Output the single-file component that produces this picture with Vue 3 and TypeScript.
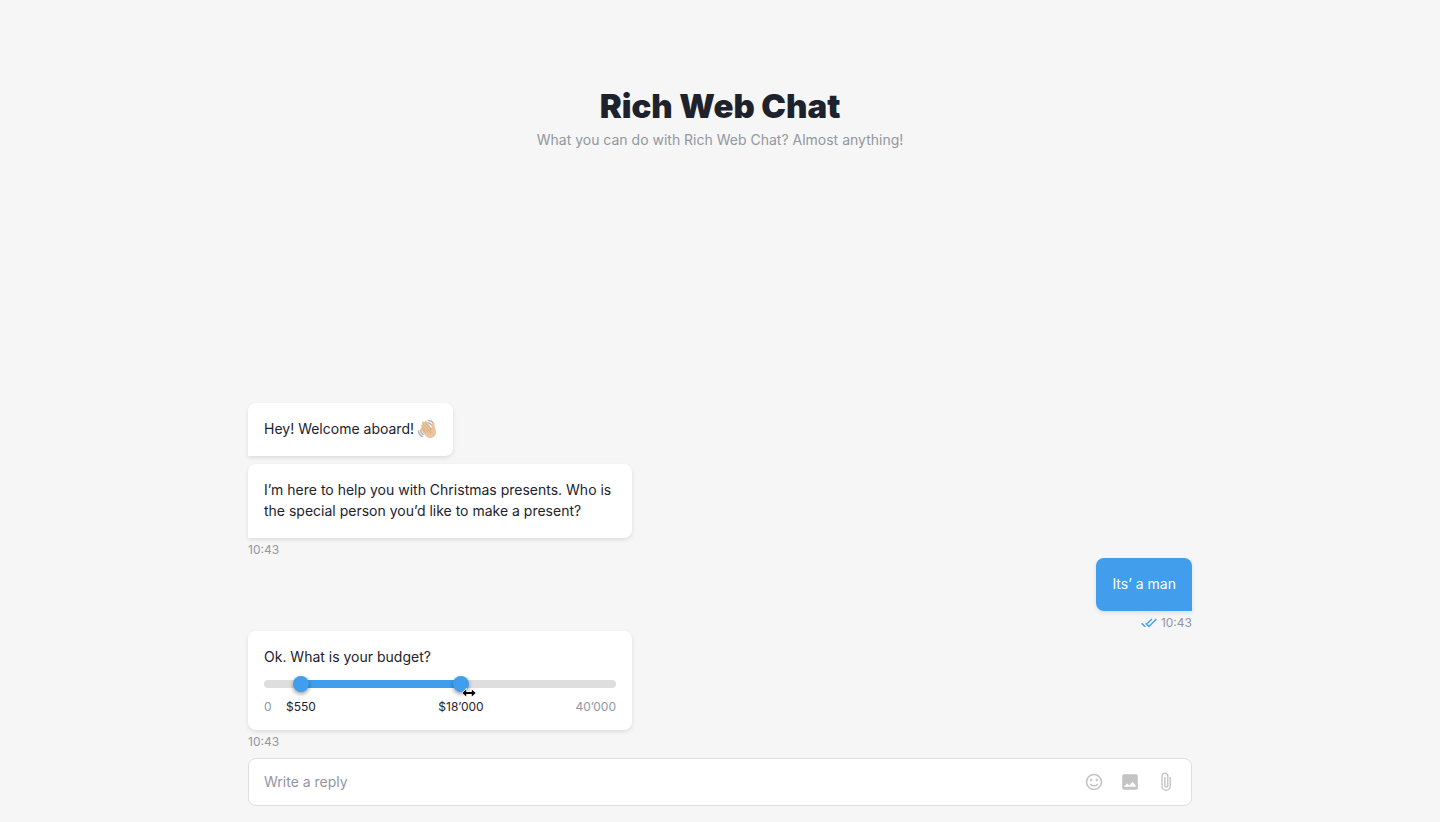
<script setup lang="ts">
import { computed, ref } from 'vue'

const min = 0
const travel = 336
const low = ref(29)
const high = ref(189)
const reply = ref('')

const scale: [number, number][] = [
  [0, 0],
  [29, 550],
  [189, 18000],
  [travel, 40000],
]

function toPrice(position: number): string {
  let price = 0
  for (let i = 1; i < scale.length; i++) {
    const [x0, y0] = scale[i - 1]
    const [x1, y1] = scale[i]
    if (position >= x0 && position <= x1) {
      price = Math.round(y0 + ((position - x0) / (x1 - x0)) * (y1 - y0))
    }
  }
  return '$' + String(price).replace(/\B(?=(\d{3})+$)/g, '’')
}

const track = computed(() => ({
  '--low': low.value / travel,
  '--high': high.value / travel,
}))

function setLow(event: Event) {
  const input = event.target as HTMLInputElement
  low.value = Math.min(Number(input.value), high.value)
  input.value = String(low.value)
}

function setHigh(event: Event) {
  const input = event.target as HTMLInputElement
  high.value = Math.max(Number(input.value), low.value)
  input.value = String(high.value)
}
</script>

<template>
  <main class="page">
    <header class="intro">
      <h1>Rich Web Chat</h1>
      <p>What you can do with Rich Web Chat? Almost anything!</p>
    </header>

    <section class="chat" aria-label="Conversation">
      <div class="bubble tail-left first">
        <p class="greeting">
          <span>Hey! Welcome aboard!</span>
          <svg class="wave" viewBox="0 0 40 40" role="img" aria-label="Waving hand">
            <g fill="none" stroke="#b4b8bc" stroke-width="3.2" stroke-linecap="round">
              <path d="M23 3c5 0 8 2 10 6" />
              <path d="M22 8c3 0 5 1 7 4" />
              <path d="M3 24c0 5 3 9 8 11" />
              <path d="M7 23c0 4 2 6 5 8" />
            </g>
            <path
              d="M9 15c-2-3 1-5 3-3l-2-4c-1-3 2-5 4-2l1 1c0-3 3-4 5-1l9 12c1-3 0-5 1-8 1-3 5-2 5 1 0 5 3 9 3 15 0 7-5 12-12 12-5 0-8-3-11-7L7 22c-2-3 1-5 3-3z"
              fill="#ebc49c"
            />
            <g fill="none" stroke="#c99b70" stroke-width="1.2" stroke-linecap="round">
              <path d="M10 19l7 8M9 14l12 12M12 10l12 14M16 7l11 13M29 18c-3 3-4 6-2 10" />
            </g>
          </svg>
        </p>
      </div>

      <div class="bubble wide tail-left">
        <p>I’m here to help you with Christmas presents. Who is the special person you’d like to make a present?</p>
      </div>
      <time class="meta">10:43</time>

      <div class="bubble own">
        <p>Its’ a man</p>
      </div>
      <div class="meta meta-own">
        <svg class="ticks" viewBox="0 0 16 10" role="img" aria-label="Read">
          <g fill="none" stroke="#409eed" stroke-width="1.4">
            <path d="M.6 5.2l3.6 3.6M4.6 5.2l3.4 3.4L15.4.9M10.9.9L6.3 5.6" />
          </g>
        </svg>
        <time>10:43</time>
      </div>

      <div class="bubble wide budget">
        <p>Ok. What is your budget?</p>
        <div class="range" :style="track">
          <div class="slider">
            <div class="fill"></div>
            <input type="range" aria-label="Minimum budget" :min="min" :max="travel" :value="low" @input="setLow" />
            <input type="range" aria-label="Maximum budget" :min="min" :max="travel" :value="high" @input="setHigh" />
            <svg class="pointer" viewBox="0 0 16 10" aria-hidden="true">
              <path
                d="M1.4 5l3.8-3.6V4h5.6V1.4L14.6 5l-3.8 3.6V6H5.2v2.6z"
                fill="#000"
                stroke="#fff"
                stroke-width="1.4"
                paint-order="stroke"
              />
            </svg>
          </div>
          <div class="labels">
            <span>0</span>
            <output class="value value-low">{{ toPrice(low) }}</output>
            <output class="value value-high">{{ toPrice(high) }}</output>
            <span>40’000</span>
          </div>
        </div>
      </div>
      <time class="meta">10:43</time>
    </section>

    <form class="composer" @submit.prevent>
      <input v-model="reply" type="text" placeholder="Write a reply" aria-label="Write a reply" />
      <button type="button" aria-label="Add emoji">
        <svg viewBox="0 0 20 20">
          <circle cx="10" cy="10" r="7.5" fill="none" stroke="#c4c4c4" stroke-width="1.6" />
          <circle cx="7.2" cy="8" r="1.2" fill="#c4c4c4" />
          <circle cx="12.8" cy="8" r="1.2" fill="#c4c4c4" />
          <path d="M6.3 11.8c1.4 2.7 6 2.7 7.4 0" fill="none" stroke="#c4c4c4" stroke-width="1.5" />
        </svg>
      </button>
      <button type="button" aria-label="Add image">
        <svg viewBox="0 0 20 20">
          <path
            fill="#c4c4c4"
            fill-rule="evenodd"
            d="M4 2.2h12A1.8 1.8 0 0 1 17.8 4v12a1.8 1.8 0 0 1-1.8 1.8H4A1.8 1.8 0 0 1 2.2 16V4A1.8 1.8 0 0 1 4 2.2zM4.2 14.8h11.6v-1.2l-3.3-3.8-3.2 3.6-2-2-3.1 2.9z"
          />
        </svg>
      </button>
      <button type="button" aria-label="Attach file">
        <svg viewBox="0 0 20 20">
          <path
            d="M14.2 5v9.2a4.1 4.1 0 0 1-8.2 0V4a2.9 2.9 0 0 1 5.8 0v9.6a1.5 1.5 0 0 1-3 0V5"
            fill="none"
            stroke="#c4c4c4"
            stroke-width="1.4"
          />
        </svg>
      </button>
    </form>
  </main>
</template>

<style>
body {
  background: #f6f6f6;
}
</style>

<style scoped>
.page {
  box-sizing: border-box;
  display: flex;
  flex-direction: column;
  min-height: 100vh;
  max-width: 976px;
  margin: 0 auto;
  padding: 86px 16px 16px;
  color: #1d222d;
  font-family: Inter, "Liberation Sans", sans-serif;
  font-size: 14px;
  line-height: 21px;
}

h1,
p {
  margin: 0;
}

.intro {
  text-align: center;
  color: #92969f;
}

h1 {
  margin-bottom: 3px;
  color: #1d222d;
  font-size: 33px;
  font-weight: 900;
  line-height: 40px;
}

.chat {
  display: flex;
  flex-direction: column;
  align-items: flex-start;
  margin: auto 0 8px;
}

.bubble {
  box-sizing: border-box;
  max-width: 100%;
  padding: 15px 16px 17px;
  border-radius: 8px;
  background: #fff;
  box-shadow: 0 2px 4px rgba(0, 0, 0, 0.1);
}

.tail-left {
  border-bottom-left-radius: 0;
}

.first {
  margin-bottom: 8px;
}

.wide {
  width: 384px;
}

.budget {
  padding-bottom: 15px;
}

.greeting {
  display: flex;
  align-items: center;
  gap: 3px;
}

.wave {
  width: 20px;
  height: 20px;
}

.own {
  align-self: flex-end;
  border-bottom-right-radius: 0;
  background: #409eed;
  color: #fff;
}

.meta {
  margin-top: 4px;
  color: #92969f;
  font-size: 12px;
  line-height: 16px;
}

.meta-own {
  display: flex;
  align-items: center;
  align-self: flex-end;
  gap: 4px;
}

.ticks {
  width: 16px;
  height: 10px;
}

.slider {
  position: relative;
  height: 16px;
  margin-top: 9px;
}

.slider::before,
.fill {
  content: "";
  position: absolute;
  top: 4px;
  height: 8px;
}

.slider::before {
  left: 0;
  right: 0;
  border-radius: 4px;
  background: #dedede;
}

.fill {
  left: calc(8px + (100% - 16px) * var(--low));
  right: calc(8px + (100% - 16px) * (1 - var(--high)));
  background: #409eed;
}

.slider input {
  position: absolute;
  inset: 0;
  width: 100%;
  height: 16px;
  margin: 0;
  appearance: none;
  background: none;
  pointer-events: none;
}

.slider input::-webkit-slider-thumb {
  width: 16px;
  height: 16px;
  border: 0;
  border-radius: 50%;
  appearance: none;
  background: #409eed;
  box-shadow: 0 2px 4px rgba(0, 0, 0, 0.4);
  cursor: ew-resize;
  pointer-events: auto;
}

.pointer {
  position: absolute;
  top: 12px;
  left: calc(8px + (100% - 16px) * var(--high));
  width: 16px;
  height: 10px;
  pointer-events: none;
}

.labels {
  position: relative;
  display: flex;
  justify-content: space-between;
  margin-top: 7px;
  color: #92969f;
  font-size: 12px;
  line-height: 16px;
}

.value {
  position: absolute;
  color: #1d222d;
  transform: translateX(-50%);
}

.value-low {
  left: calc(8px + (100% - 16px) * var(--low));
}

.value-high {
  left: calc(8px + (100% - 16px) * var(--high));
}

.composer {
  box-sizing: border-box;
  display: flex;
  align-items: center;
  gap: 16px;
  height: 48px;
  padding: 0 15px;
  border: 1px solid #dedede;
  border-radius: 8px;
  background: #fff;
}

.composer input {
  flex: 1;
  min-width: 0;
  height: 32px;
  padding: 0 0 2px;
  border: 0;
  outline: 0;
  background: none;
  color: inherit;
  font: inherit;
}

.composer input::placeholder {
  color: #92969f;
  opacity: 1;
}

.composer button {
  width: 20px;
  height: 20px;
  padding: 0;
  border: 0;
  background: none;
  cursor: pointer;
}

.composer svg {
  display: block;
  width: 20px;
  height: 20px;
}
</style>
